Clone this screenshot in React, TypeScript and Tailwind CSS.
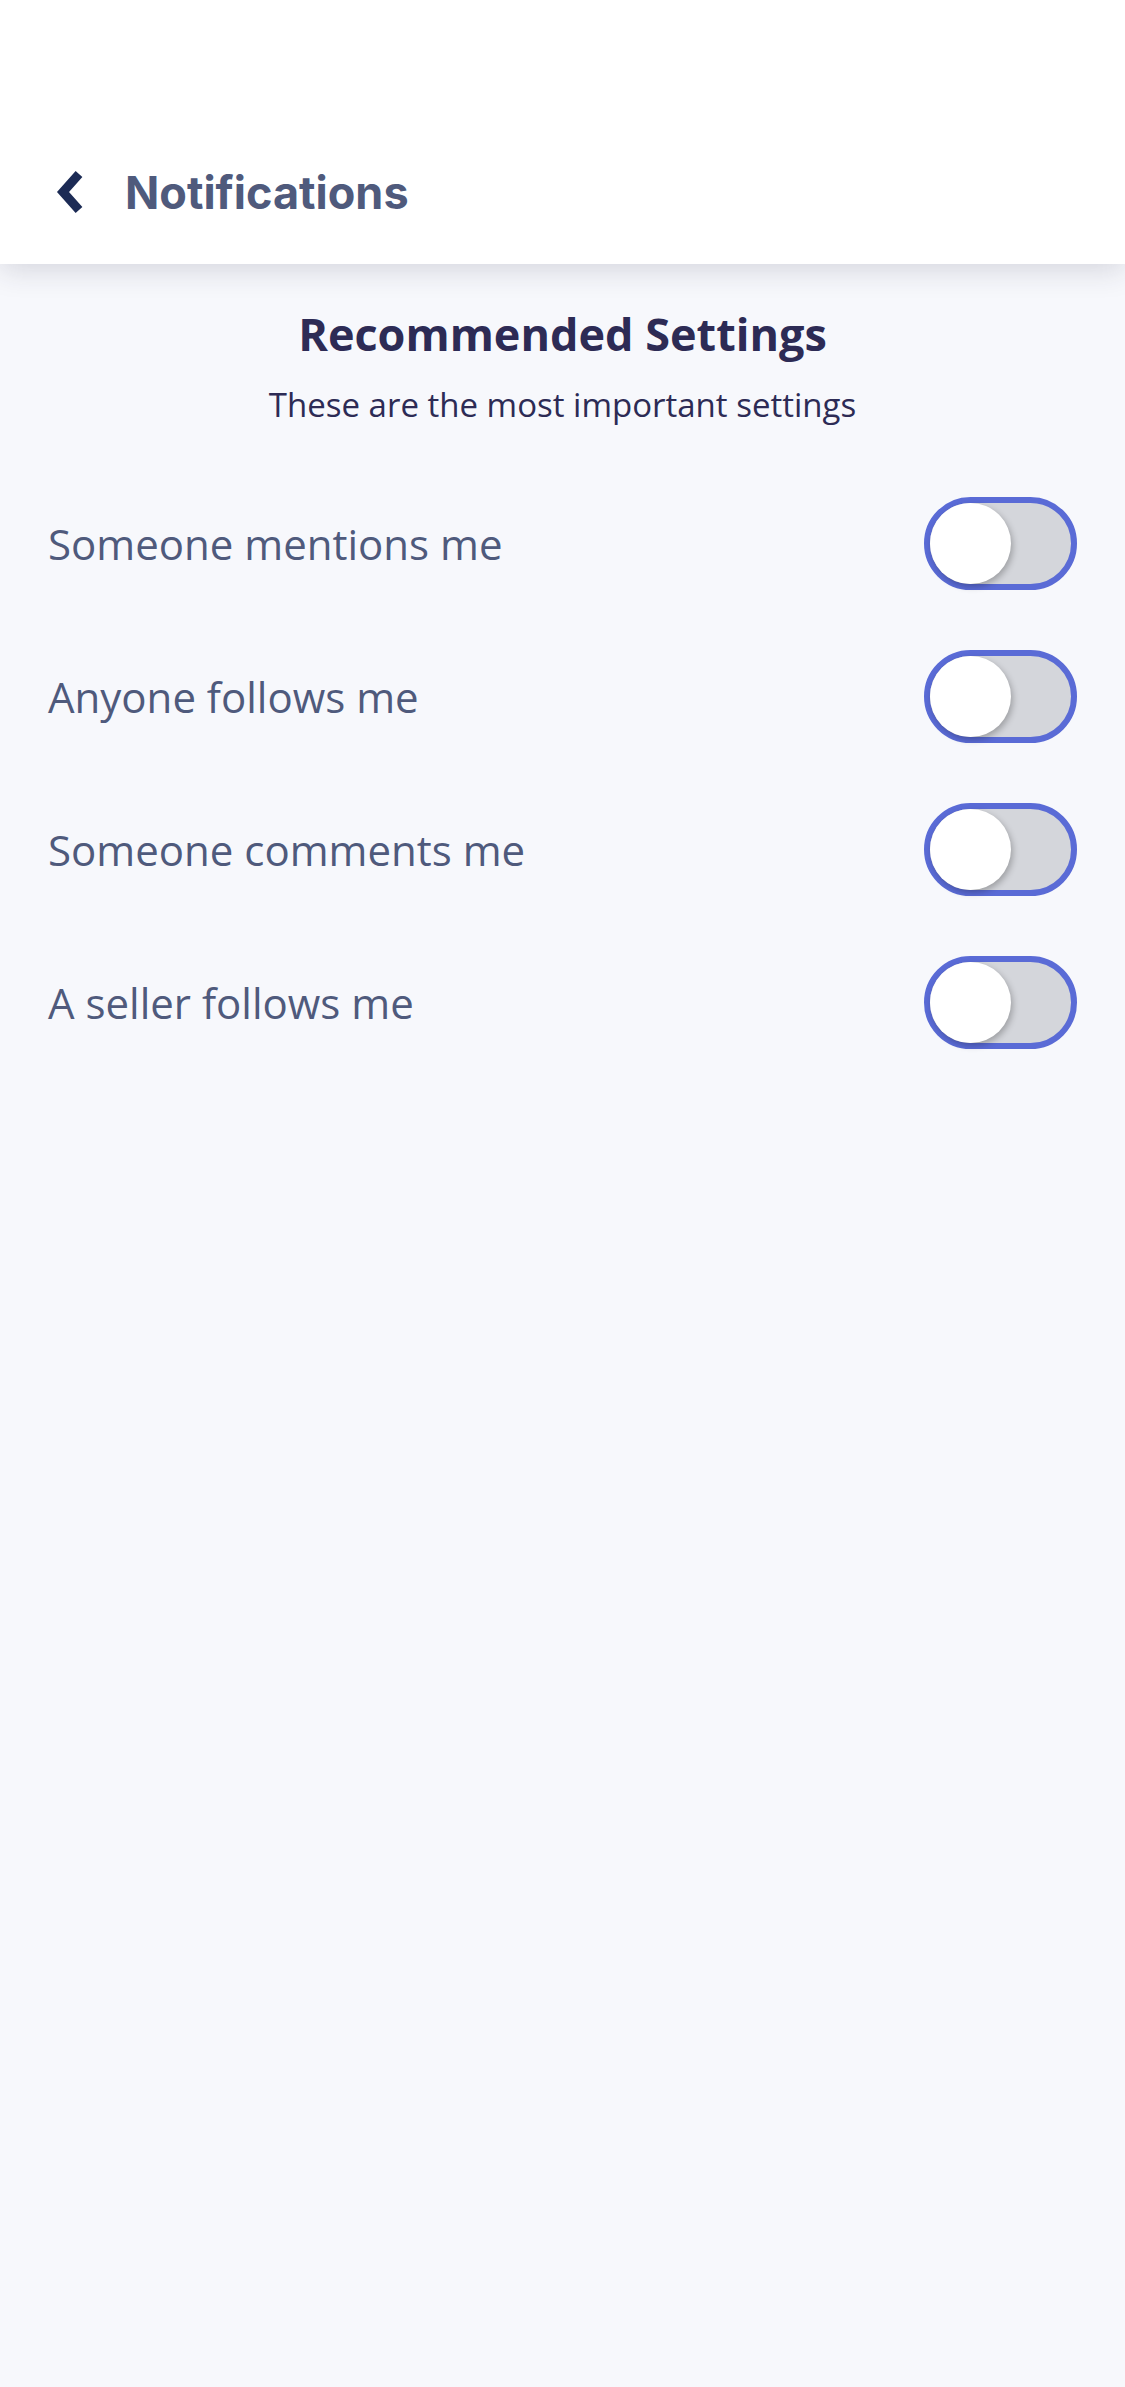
import React, { useState } from 'react';

const settings = [
  'Someone mentions me',
  'Anyone follows me',
  'Someone comments me',
  'A seller follows me',
];

function Toggle({ on, onChange }: { on: boolean; onChange: () => void }) {
  return (
    <button
      onClick={onChange}
      className={`relative flex h-[93px] w-[153px] items-center rounded-full border-[6px] border-[#5a6bd6] ${
        on ? 'bg-[#5a6bd6] justify-end' : 'bg-[#d4d6db] justify-start'
      }`}
    >
      <span className="h-[81px] w-[81px] rounded-full bg-white shadow-[2px_3px_6px_rgba(0,0,0,0.25)]" />
    </button>
  );
}

export default function App() {
  const [values, setValues] = useState<boolean[]>([false, false, false, false]);

  const toggle = (i: number) => {
    setValues((v) => v.map((x, j) => (j === i ? !x : x)));
  };

  return (
    <div className="min-h-[2387px] w-full bg-[#f7f8fc] font-['Open_Sans',sans-serif]">
      {/* Header */}
      <header className="relative z-10 flex h-[264px] items-end bg-white pb-[54px] shadow-[0_6px_28px_rgba(40,40,60,0.16)]">
        <div className="flex h-[36px] items-center pl-[55px]">
          <svg width="30" height="44" viewBox="0 0 30 44">
            <path d="M24 4 L8 22 L24 40" fill="none" stroke="#1c2b55" strokeWidth="9" strokeLinecap="butt" strokeLinejoin="miter" />
          </svg>
          <span className="ml-[40px] font-['Inter',sans-serif] text-[45px] font-bold leading-none text-[#4f5a7c]">
            Notifications
          </span>
        </div>
      </header>

      {/* Recommended */}
      <div className="flex flex-col items-center pt-[40px]">
        <h1 className="text-[45px] font-bold leading-[60px] text-[#2d2b55]">Recommended Settings</h1>
        <p className="mt-[18px] text-[33px] leading-[46px] text-[#2d2b55]">These are the most important settings</p>
      </div>

      <div className="mt-[39px] px-[48px]">
        {settings.map((label, i) => (
          <div key={label} className="flex h-[153px] items-center justify-between">
            <span className="text-[42px] text-[#4f5a7c]">{label}</span>
            <Toggle on={values[i]} onChange={() => toggle(i)} />
          </div>
        ))}
      </div>
    </div>
  );
}
